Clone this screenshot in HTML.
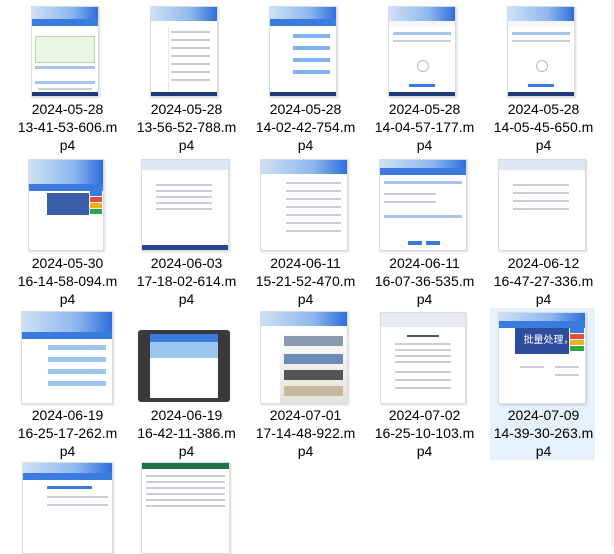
<!DOCTYPE html>
<html><head><meta charset="utf-8"><style>
body{margin:0;width:614px;height:547px;background:#fff;overflow:hidden;position:relative;font-family:"Segoe UI","Liberation Sans","Noto Sans CJK SC",sans-serif}
.sel{position:absolute;left:490px;top:308px;width:105px;height:152px;background:#e5f1fb}
.lbl{position:absolute;width:119px;text-align:center;font-size:14px;line-height:18px;color:#000}
.t{position:absolute;background:#f4f6fa;border:1px solid #d8dbe0;overflow:hidden;box-shadow:1px 1px 2px rgba(0,0,0,.15)}
.t .wp{position:absolute;left:0;right:0;top:0;height:14px;background:linear-gradient(90deg,#cfe0f5,#8db8ee 60%,#2f6fdc)}
.t .bar{position:absolute;left:0;right:0;top:12px;height:7px;background:#3a7be0}
.t .side{position:absolute;left:0;top:19px;bottom:0;width:22%;background:#fff;border-right:1px solid #e6e6e6}
.t .main{position:absolute;left:22%;right:0;top:19px;bottom:0;background:#fff}
.t .ln{position:absolute;height:2px;background:#c9ced6}
.t .task{position:absolute;left:0;right:0;bottom:0;height:4px;background:#1f3a7a}
.scroll{position:absolute;right:0;top:0;width:3px;height:547px;background:#f0f0f0}
</style></head><body>
<div class="sel"></div>
<div class="scroll"></div>

<!-- Row 1 -->
<div class="t" style="left:31px;top:6px;width:66px;height:89px"><div class="wp"></div><div class="bar"></div><div class="main" style="left:0"><div style="position:absolute;left:3px;right:3px;top:10px;height:25px;background:#eaf6e4;border:1px solid #b7d8a8"></div><div class="ln" style="left:3px;right:3px;top:40px;background:#a8c4ec;height:3px"></div><div class="ln" style="left:3px;right:3px;top:55px;background:#a8c4ec;height:3px"></div><div class="ln" style="left:6px;right:6px;top:62px"></div><div class="ln" style="left:6px;right:6px;top:70px"></div></div><div class="task"></div></div>
<div class="t" style="left:150px;top:6px;width:66px;height:89px"><div class="wp"></div><div class="main" style="top:14px;left:0"><div class="side" style="top:6px;width:25%"></div><div class="ln" style="left:30%;right:10%;top:10px"></div><div class="ln" style="left:30%;right:10%;top:18px"></div><div class="ln" style="left:30%;right:10%;top:26px"></div><div class="ln" style="left:30%;right:10%;top:34px"></div><div class="ln" style="left:30%;right:10%;top:42px"></div><div class="ln" style="left:30%;right:10%;top:50px"></div><div class="ln" style="left:30%;right:10%;top:58px"></div></div><div class="task"></div></div>
<div class="t" style="left:269px;top:6px;width:66px;height:89px"><div class="wp"></div><div class="bar"></div><div class="side"></div><div class="main"><div class="ln" style="left:8px;right:6px;top:8px;height:4px;background:#7fb2ef"></div><div class="ln" style="left:8px;right:6px;top:20px;height:4px;background:#7fb2ef"></div><div class="ln" style="left:8px;right:6px;top:32px;height:4px;background:#7fb2ef"></div><div class="ln" style="left:8px;right:6px;top:44px;height:4px;background:#7fb2ef"></div></div><div class="task"></div></div>
<div class="t" style="left:388px;top:6px;width:66px;height:89px"><div class="wp"></div><div class="main" style="left:0"><div class="ln" style="left:4px;right:4px;top:6px;background:#a8c4ec;height:3px"></div><div class="ln" style="left:4px;right:4px;top:14px"></div><div style="position:absolute;left:28px;top:34px;width:10px;height:10px;border-radius:50%;border:1px solid #bbb"></div><div class="ln" style="left:20px;width:26px;top:58px;height:3px;background:#3a7be0"></div></div><div class="task"></div></div>
<div class="t" style="left:507px;top:6px;width:66px;height:89px"><div class="wp"></div><div class="main" style="left:0"><div class="ln" style="left:4px;right:4px;top:6px;background:#a8c4ec;height:3px"></div><div class="ln" style="left:4px;right:4px;top:14px"></div><div style="position:absolute;left:28px;top:34px;width:10px;height:10px;border-radius:50%;border:1px solid #bbb"></div><div class="ln" style="left:20px;width:26px;top:58px;height:3px;background:#3a7be0"></div></div><div class="task"></div></div>

<div class="lbl" style="left:8px;top:100px">2024-05-28<br>13-41-53-606.m<br>p4</div>
<div class="lbl" style="left:127px;top:100px">2024-05-28<br>13-56-52-788.m<br>p4</div>
<div class="lbl" style="left:246px;top:100px">2024-05-28<br>14-02-42-754.m<br>p4</div>
<div class="lbl" style="left:365px;top:100px">2024-05-28<br>14-04-57-177.m<br>p4</div>
<div class="lbl" style="left:484px;top:100px">2024-05-28<br>14-05-45-650.m<br>p4</div>

<!-- Row 2 -->
<div class="t" style="left:28px;top:159px;width:74px;height:90px"><div class="wp" style="height:24px"></div><div class="bar" style="top:24px"></div><div class="side" style="top:31px"></div><div class="main" style="top:31px"><div style="position:absolute;left:2px;right:14px;top:2px;height:22px;background:#3b5ea8"></div><div style="position:absolute;right:1px;width:12px;top:0;height:5px;background:#3a7be0"></div><div style="position:absolute;right:1px;width:12px;top:6px;height:5px;background:#e84c3d"></div><div style="position:absolute;right:1px;width:12px;top:12px;height:5px;background:#f2b01e"></div><div style="position:absolute;right:1px;width:12px;top:18px;height:5px;background:#2aa84a"></div></div></div>
<div class="t" style="left:141px;top:159px;width:86px;height:90px"><div class="wp" style="height:10px;background:#dfe7f3"></div><div class="main" style="left:0;top:10px"><div class="ln" style="left:14px;right:16px;top:14px"></div><div class="ln" style="left:14px;right:16px;top:20px"></div><div class="ln" style="left:14px;right:16px;top:26px"></div><div class="ln" style="left:14px;right:16px;top:32px"></div><div class="ln" style="left:14px;right:16px;top:38px"></div></div><div class="task" style="height:5px;background:#274690"></div></div>
<div class="t" style="left:260px;top:159px;width:86px;height:90px"><div class="wp"></div><div class="side" style="top:14px"></div><div class="main" style="top:14px"><div class="ln" style="left:6px;right:6px;top:8px"></div><div class="ln" style="left:6px;right:6px;top:16px"></div><div class="ln" style="left:6px;right:6px;top:24px"></div><div class="ln" style="left:6px;right:6px;top:32px"></div><div class="ln" style="left:6px;right:6px;top:40px"></div><div class="ln" style="left:6px;right:6px;top:48px"></div><div class="ln" style="left:6px;right:6px;top:56px"></div></div></div>
<div class="t" style="left:379px;top:159px;width:86px;height:90px"><div class="wp" style="height:8px"></div><div class="bar" style="top:8px"></div><div class="main" style="left:0;top:15px"><div class="ln" style="left:4px;right:4px;top:6px;background:#a8c4ec;height:3px"></div><div class="ln" style="left:4px;right:30px;top:18px"></div><div class="ln" style="left:4px;right:30px;top:26px"></div><div class="ln" style="left:4px;right:4px;top:40px;background:#a8c4ec;height:3px"></div><div class="ln" style="left:28px;width:14px;top:66px;height:4px;background:#3a7be0"></div><div class="ln" style="left:46px;width:14px;top:66px;height:4px;background:#3a7be0"></div></div></div>
<div class="t" style="left:498px;top:159px;width:86px;height:90px"><div class="wp" style="height:10px;background:#dfe7f3"></div><div class="main" style="left:0;top:10px"><div class="ln" style="left:14px;right:16px;top:14px"></div><div class="ln" style="left:14px;right:16px;top:22px"></div><div class="ln" style="left:14px;right:16px;top:30px"></div><div class="ln" style="left:14px;right:16px;top:38px"></div></div></div>

<div class="lbl" style="left:8px;top:254px">2024-05-30<br>16-14-58-094.m<br>p4</div>
<div class="lbl" style="left:127px;top:254px">2024-06-03<br>17-18-02-614.m<br>p4</div>
<div class="lbl" style="left:246px;top:254px">2024-06-11<br>15-21-52-470.m<br>p4</div>
<div class="lbl" style="left:365px;top:254px">2024-06-11<br>16-07-36-535.m<br>p4</div>
<div class="lbl" style="left:484px;top:254px">2024-06-12<br>16-47-27-336.m<br>p4</div>

<!-- Row 3 -->
<div class="t" style="left:21px;top:311px;width:90px;height:91px"><div class="wp" style="height:20px"></div><div class="bar" style="top:20px"></div><div class="side" style="top:27px"></div><div class="main" style="top:27px"><div class="ln" style="left:6px;right:6px;top:6px;height:5px;background:#9cc6ef"></div><div class="ln" style="left:6px;right:6px;top:18px;height:5px;background:#9cc6ef"></div><div class="ln" style="left:6px;right:6px;top:30px;height:5px;background:#9cc6ef"></div><div class="ln" style="left:6px;right:6px;top:42px;height:5px;background:#9cc6ef"></div></div></div>
<div style="position:absolute;left:138px;top:330px;width:92px;height:72px;background:#3a3a3a;border-radius:3px"><div style="position:absolute;left:12px;right:12px;top:4px;bottom:4px;background:#fff"><div style="height:8px;background:#3a7be0"></div><div class="ln" style="left:4px;right:4px;top:14px;height:4px;background:#9cc6ef"></div><div class="ln" style="left:4px;right:4px;top:26px;height:4px;background:#9cc6ef"></div><div class="ln" style="left:4px;right:4px;top:38px;height:4px;background:#9cc6ef"></div><div class="ln" style="left:4px;right:4px;top:50px;height:4px;background:#9cc6ef"></div></div></div>
<div class="t" style="left:260px;top:311px;width:86px;height:91px"><div class="wp"></div><div class="side" style="top:14px"></div><div class="main" style="top:14px;background:linear-gradient(#fff,#e6e2dc)"><div class="ln" style="left:4px;right:4px;top:10px;height:10px;background:#8a9ab0"></div><div class="ln" style="left:4px;right:4px;top:28px;height:10px;background:#6d8bb8"></div><div class="ln" style="left:4px;right:4px;top:44px;height:10px;background:#555"></div><div class="ln" style="left:4px;right:4px;top:60px;height:10px;background:#c9b8a0"></div></div></div>
<div class="t" style="left:380px;top:312px;width:84px;height:90px"><div class="wp" style="height:14px;background:#e8ecf2"></div><div class="main" style="left:0;top:14px"><div class="ln" style="left:26px;right:26px;top:8px;background:#555"></div><div class="ln" style="left:14px;right:14px;top:16px"></div><div class="ln" style="left:14px;right:14px;top:22px"></div><div class="ln" style="left:14px;right:14px;top:28px"></div><div class="ln" style="left:14px;right:14px;top:34px"></div><div class="ln" style="left:14px;right:14px;top:44px"></div><div class="ln" style="left:14px;right:14px;top:52px"></div><div class="ln" style="left:14px;right:14px;top:60px"></div></div></div>
<div class="t" style="left:498px;top:312px;width:86px;height:90px"><div class="wp" style="height:8px"></div><div class="bar" style="top:8px"></div><div class="side" style="top:15px;width:18%"></div><div class="main" style="top:15px;left:18%"><div style="position:absolute;left:1px;right:16px;top:0;height:26px;background:#2e4c9c;color:#fff;font-size:10px;line-height:26px;padding-left:8px;white-space:nowrap;overflow:hidden">批量处理，高</div><div style="position:absolute;right:1px;width:14px;top:0;height:5px;background:#3a7be0"></div><div style="position:absolute;right:1px;width:14px;top:6px;height:5px;background:#e84c3d"></div><div style="position:absolute;right:1px;width:14px;top:12px;height:5px;background:#f2b01e"></div><div style="position:absolute;right:1px;width:14px;top:18px;height:5px;background:#2aa84a"></div><div class="ln" style="left:6px;width:24px;top:38px"></div><div class="ln" style="right:6px;width:24px;top:38px"></div><div class="ln" style="right:6px;width:24px;top:46px"></div></div></div>

<div class="lbl" style="left:8px;top:406px">2024-06-19<br>16-25-17-262.m<br>p4</div>
<div class="lbl" style="left:127px;top:406px">2024-06-19<br>16-42-11-386.m<br>p4</div>
<div class="lbl" style="left:246px;top:406px">2024-07-01<br>17-14-48-922.m<br>p4</div>
<div class="lbl" style="left:365px;top:406px">2024-07-02<br>16-25-10-103.m<br>p4</div>
<div class="lbl" style="left:484px;top:406px">2024-07-09<br>14-39-30-263.m<br>p4</div>

<!-- Row 4 -->
<div class="t" style="left:22px;top:462px;width:89px;height:90px"><div class="wp" style="height:10px"></div><div class="bar" style="top:10px"></div><div class="side" style="top:17px"></div><div class="main" style="top:17px"><div class="ln" style="left:4px;right:20px;top:6px;height:3px;background:#3a7be0"></div><div class="ln" style="left:4px;right:4px;top:16px"></div><div class="ln" style="left:4px;right:4px;top:24px"></div></div></div>
<div class="t" style="left:141px;top:462px;width:87px;height:90px;background:#fff"><div class="wp" style="height:6px;background:#217346"></div><div class="main" style="left:0;top:8px"><div class="ln" style="left:4px;right:4px;top:4px"></div><div class="ln" style="left:4px;right:4px;top:10px"></div><div class="ln" style="left:4px;right:4px;top:16px"></div><div class="ln" style="left:4px;right:4px;top:22px"></div><div class="ln" style="left:4px;right:4px;top:28px"></div><div class="ln" style="left:4px;right:4px;top:34px"></div></div></div>
</body></html>
